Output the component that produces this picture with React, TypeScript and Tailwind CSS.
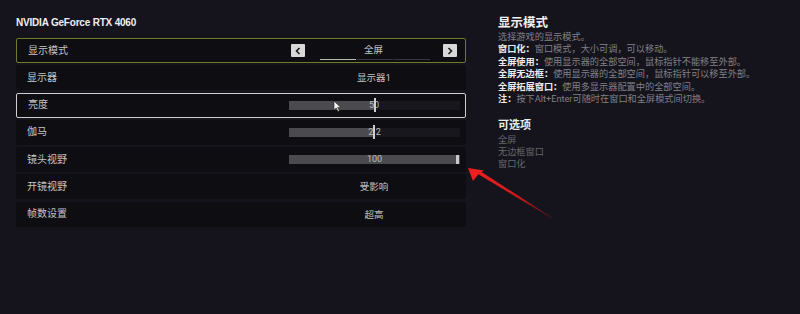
import React from "react";

function Cursor() {
  return (
    <svg className="absolute left-[333px] top-[100px]" width="9" height="12" viewBox="0 0 9 12">
      <path d="M1 1 L1 10 L3.2 8 L5 11.5 L6.4 10.8 L4.7 7.4 L7.8 7.4 Z" fill="#f2f2f2" stroke="#222" strokeWidth="0.6" />
    </svg>
  );
}

function Arrow() {
  return (
    <svg className="absolute left-0 top-0 pointer-events-none" width="800" height="314" viewBox="0 0 800 314">
      <defs>
        <linearGradient id="ag" x1="552" y1="218" x2="470" y2="170" gradientUnits="userSpaceOnUse">
          <stop offset="0" stopColor="#7a1414" stopOpacity="0.5" />
          <stop offset="0.4" stopColor="#d01818" />
          <stop offset="1" stopColor="#f02020" />
        </linearGradient>
      </defs>
      <polygon points="552,218.5 478,174 480,171 552,217.5" fill="url(#ag)" />
      <polygon points="468,168 484,170.5 479,173.5 473,181" fill="#ef1f1f" />
    </svg>
  );
}

function Slider({ pct, text, handleRight }: { pct: number; text: string; handleRight?: boolean }) {
  return (
    <div className="relative ml-[273px] w-[171px] h-[9px] bg-[#18171d]">
      <div className="absolute left-0 top-0 h-full bg-[#4a4a4f]" style={{ width: `${pct}%` }} />
      <div className="absolute inset-0 flex items-center justify-center text-[9px] leading-none text-[#bdbdbd]">
        {text}
      </div>
      {handleRight ? (
        <div className="absolute right-[1px] top-[0px] w-[3px] h-[9px] bg-[#c8c8c8]" />
      ) : (
        <div className="absolute top-[-3px] w-[2px] h-[14px] bg-[#cfcfcf]" style={{ left: `${pct}%` }} />
      )}
    </div>
  );
}

function Row({
  label,
  children,
  border,
}: {
  label: string;
  children?: React.ReactNode;
  border?: string;
}) {
  return (
    <div
      className={`relative flex items-center h-[25px] bg-[#0e0d12] rounded-[2px] box-border ${border ?? ""}`}
    >
      <div className="absolute left-[11px] text-[10px] leading-none text-[#c4c4c4]">{label}</div>
      {children}
    </div>
  );
}

function Value({ text }: { text: string }) {
  return (
    <div className="absolute left-[358px] -translate-x-1/2 text-[9.5px] leading-none text-[#c2c2c2] whitespace-nowrap">
      {text}
    </div>
  );
}

export default function App() {
  return (
    <div className="relative w-[800px] h-[314px] overflow-hidden bg-[#15141c] font-['Roboto','Noto_Sans_CJK_SC',sans-serif] text-white">
      <div className="flex">
        <div className="pl-[16px] w-[466px] pt-[16px]">
          <div className="h-[22px] font-['Liberation_Sans','Noto_Sans_CJK_SC',sans-serif] font-bold text-[10px] leading-[13px] text-[#efefef] tracking-[-0.2px]">
            NVIDIA GeForce RTX 4060
          </div>
          <div className="flex flex-col gap-[2.3px]">
            <Row label="显示模式" border="border-[1.5px] border-[#6b7c2a]">
              <div className="absolute left-[273.5px] top-[5px] w-[14px] h-[13px] bg-[#d8d8d8] rounded-[1px] flex items-center justify-center">
                <svg width="6" height="8" viewBox="0 0 6 8">
                  <path d="M4.5 1 L1.5 4 L4.5 7" fill="none" stroke="#1a1a1a" strokeWidth="1.6" />
                </svg>
              </div>
              <div className="absolute left-[425.5px] top-[5px] w-[14px] h-[13px] bg-[#d8d8d8] rounded-[1px] flex items-center justify-center">
                <svg width="6" height="8" viewBox="0 0 6 8">
                  <path d="M1.5 1 L4.5 4 L1.5 7" fill="none" stroke="#1a1a1a" strokeWidth="1.6" />
                </svg>
              </div>
              <div className="absolute left-[356.5px] top-[6px] -translate-x-1/2 text-[9.5px] leading-none text-[#c8c8c8]">
                全屏
              </div>
              <div className="absolute left-[302.5px] top-[19.5px] flex gap-[1px]">
                <div className="w-[36px] h-[1.5px] bg-[#b4bcaa]" />
                <div className="w-[36px] h-[1.5px] bg-[#3a3a3e]" />
                <div className="w-[36px] h-[1.5px] bg-[#3a3a3e]" />
              </div>
            </Row>
            <Row label="显示器">
              <Value text="显示器1" />
            </Row>
            <Row label="亮度" border="border-[1.5px] border-[#cfcfcf]">
              <div className="ml-[-1.5px]">
                <Slider pct={50} text="50" />
              </div>
            </Row>
            <Row label="伽马">
              <Slider pct={49} text="2.2" />
            </Row>
            <Row label="镜头视野">
              <Slider pct={100} text="100" handleRight />
            </Row>
            <Row label="开镜视野">
              <Value text="受影响" />
            </Row>
            <Row label="帧数设置">
              <Value text="超高" />
            </Row>
          </div>
        </div>
        <div className="ml-[32px] pt-[15px] text-[9.2px] leading-[12.4px] text-[#808088]">
          <div className="text-[12.5px] leading-[16px] font-bold text-[#f0f0f0] mb-[0px]">显示模式</div>
          <div>选择游戏的显示模式。</div>
          <div>
            <span className="font-bold text-[#ececec]">窗口化：</span>窗口模式，大小可调，可以移动。
          </div>
          <div>
            <span className="font-bold text-[#ececec]">全屏使用：</span>使用显示器的全部空间，鼠标指针不能移至外部。
          </div>
          <div>
            <span className="font-bold text-[#ececec]">全屏无边框：</span>使用显示器的全部空间，鼠标指针可以移至外部。
          </div>
          <div>
            <span className="font-bold text-[#ececec]">全屏拓展窗口：</span>使用多显示器配置中的全部空间。
          </div>
          <div>
            <span className="font-bold text-[#ececec]">注：</span>按下Alt+Enter可随时在窗口和全屏模式间切换。
          </div>
          <div className="mt-[14px] text-[11px] leading-[14px] font-bold text-[#ececec]">可选项</div>
          <div className="text-[#66666e] leading-[12px] mt-[1px]">全屏</div>
          <div className="text-[#66666e] leading-[12px]">无边框窗口</div>
          <div className="text-[#66666e] leading-[12px]">窗口化</div>
        </div>
      </div>
      <Cursor />
      <Arrow />
    </div>
  );
}
